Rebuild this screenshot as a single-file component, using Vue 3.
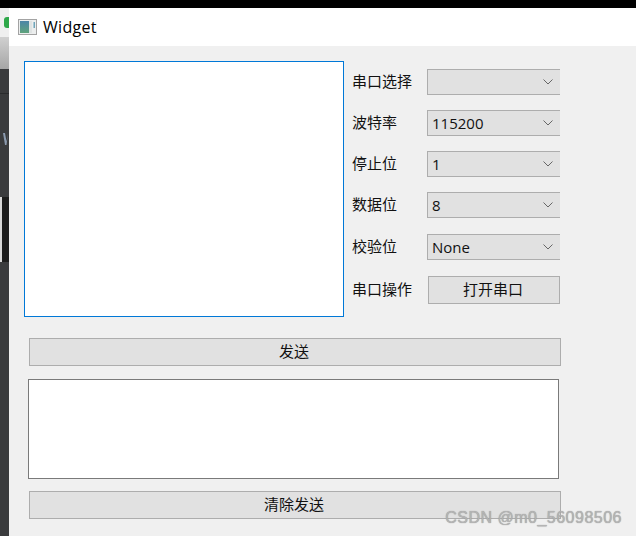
<script setup>
const selects = [
  { label: '串口选择', value: '' },
  { label: '波特率', value: '115200' },
  { label: '停止位', value: '1' },
  { label: '数据位', value: '8' },
  { label: '校验位', value: 'None' },
]
</script>

<template>
  <div class="screen">
    <div class="topbar"></div>
    <div class="desk">
      <div class="strip">
        <div class="strip-a"><span class="green"></span></div>
        <div class="strip-b"></div>
        <div class="strip-c"><span class="strip-v"></span></div>
        <div class="strip-d"></div>
        <div class="strip-e"></div>
      </div>
      <div class="window">
        <div class="titlebar">
          <svg class="appicon" width="20" height="16" viewBox="0 0 20 16">
            <defs>
              <linearGradient id="iconfill" x1="0" y1="0" x2="0" y2="1">
                <stop offset="0" stop-color="#4b85a8" />
                <stop offset="1" stop-color="#5fa37c" />
              </linearGradient>
            </defs>
            <rect x="0.5" y="0.5" width="18" height="15" fill="#eceeee" stroke="#a3a3a3" />
            <rect x="2" y="2" width="9" height="12" fill="url(#iconfill)" />
            <rect x="11" y="2" width="3" height="12" fill="#dfe3e3" />
            <rect x="15.5" y="3" width="1.5" height="6" fill="#6fa6bb" />
          </svg>
          <span class="title">Widget</span>
        </div>
        <div class="body">
          <div class="upper">
            <div class="recv"></div>
            <div class="form">
              <div v-for="s in selects" :key="s.label" class="row">
                <span class="label">{{ s.label }}</span>
                <div class="select">
                  <span class="value">{{ s.value }}</span>
                  <svg width="10" height="6" viewBox="0 0 10 6"><path d="M0.5 0.5 L5 5 L9.5 0.5" fill="none" stroke="#666" stroke-width="1" /></svg>
                </div>
              </div>
              <div class="row action">
                <span class="label">串口操作</span>
                <div class="btn open">打开串口</div>
              </div>
            </div>
          </div>
          <div class="btn wide send">发送</div>
          <div class="sendbox"></div>
          <div class="btn wide clear">清除发送</div>
        </div>
      </div>
    </div>
    <div class="mark">CSDN @m0_56098506</div>
  </div>
</template>

<style scoped>
.screen {
  position: relative;
  width: 636px;
  height: 536px;
  overflow: hidden;
  display: flex;
  flex-direction: column;
  font-family: "Liberation Sans", "Noto Sans CJK SC", sans-serif;
  color: #111;
  background: #f0f0f0;
}
.topbar { height: 8px; background: #000; flex: none; }
.desk { flex: 1; display: flex; min-height: 0; }
.strip { width: 9px; flex: none; display: flex; flex-direction: column; background: #3a3b3d; overflow: hidden; }
.strip-a { height: 29px; background: #efefef; position: relative; flex: none; }
.green { position: absolute; left: 4px; top: 9px; width: 5px; height: 11px; background: #2fa84a; border-radius: 3px 0 0 3px; }
.strip-b { height: 32px; flex: none; background: linear-gradient(#d0d0d0, #a6a6a6); }
.strip-c { height: 128px; flex: none; background: #3a3b3d; border-top: 24px solid #3a3b3d; box-sizing: border-box; position: relative; }
.strip-c::before { content: ""; position: absolute; left: 0; right: 0; top: 0; height: 1px; background: #2a2b2d; }
.strip-v { position: absolute; left: 3px; top: 40px; width: 5px; height: 12px; background: #8b9aae; clip-path: polygon(0 0, 40% 0, 70% 70%, 100% 0, 100% 0, 70% 100%, 40% 100%); }
.strip-d { height: 65px; flex: none; background: #1c1c1c; border-left: 2px solid #d8d8d8; box-sizing: border-box; }
.strip-e { flex: 1; background: #3a3b3d; }
.window { flex: 1; display: flex; flex-direction: column; background: #f0f0f0; }
.titlebar { height: 38px; flex: none; background: #fff; display: flex; align-items: center; padding-left: 9px; gap: 5px; }
.appicon { flex: none; }
.title { font-family: "Open Sans", sans-serif; font-size: 16px; letter-spacing: 0.3px; color: #000; }
.body { padding: 15px 0 0 15px; display: flex; flex-direction: column; align-items: flex-start; }
.upper { display: flex; gap: 8px; }
.recv { width: 318px; height: 254px; background: #fff; border: 1px solid #0078d7; }
.form { display: flex; flex-direction: column; gap: 15px; padding-top: 8px; }
.row { display: flex; align-items: center; height: 26px; width: 208px; font-size: 15px; }
.row:nth-child(5) { margin-top: 1px; }
.action { margin-top: 1px; height: 28px; }
.label { width: 75px; flex: none; padding-bottom: 4px; }
.select {
  width: 133px; height: 26px; box-sizing: border-box;
  background: #e1e1e1; border: 1px solid #adadad; border-right: none;
  display: flex; align-items: center; justify-content: space-between;
  padding: 0 7px 0 4px; font-family: "Open Sans", sans-serif; font-size: 15px;
}
.value { padding-bottom: 1px; }
.btn {
  box-sizing: border-box; background: #e1e1e1; border: 1px solid #adadad;
  display: flex; align-items: center; justify-content: center; font-size: 15px;
  padding: 0 2px 3px 0;
}
.open { width: 132px; height: 28px; margin-left: 1px; }
.wide { width: 532px; height: 28px; margin-left: 5px; }
.send { margin-top: 21px; }
.sendbox { width: 531px; height: 100px; box-sizing: border-box; margin: 13px 0 12px 4px; background: #fff; border: 1px solid #7a7a7a; }
.mark {
  position: absolute; right: 14px; bottom: 9px;
  font-family: "Liberation Sans", sans-serif; font-size: 16px; letter-spacing: 0.5px;
  color: #b4b4b4; text-shadow: 0 0 1px #8a8a8a;
}
</style>
